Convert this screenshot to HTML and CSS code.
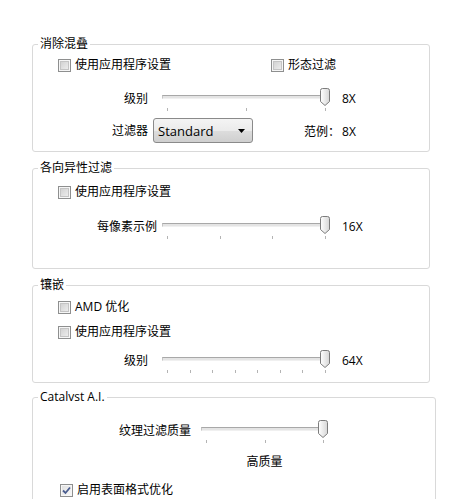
FILE: index.html
```html
<!DOCTYPE html>
<html lang="zh-CN">

<head>
    <meta charset="UTF-8">
    <meta name="viewport" content="width=device-width, initial-scale=1.0">
    <title>3D 设置</title>
    <link rel="stylesheet" href="styles.css">
</head>

<body>

    <!-- 消除混叠 -->
    <fieldset class="group group-aa">
        <legend>消除混叠</legend>
        <div class="check-row row-aa">
            <label class="check check-wide"><span class="box"></span>使用应用程序设置</label>
            <label class="check"><span class="box"></span>形态过滤</label>
        </div>
        <div class="slider-row row-aa-level">
            <span class="slider-label label-short">级别</span>
            <div class="slider gap-wide">
                <div class="track"></div>
                <svg class="thumb" width="10" height="18" viewBox="0 0 10 18"><use href="#thumb"></use></svg>
                <div class="ticks"><i></i><i></i><i></i></div>
            </div>
            <span class="slider-value">8X</span>
        </div>
        <div class="filter-row">
            <span class="slider-label label-short">过滤器</span>
            <div class="combo">
                <span>Standard</span>
                <svg width="7" height="4" viewBox="0 0 7 4"><path d="M0 0H7L3.5 4Z" fill="#000"></path></svg>
            </div>
            <span class="sample">范例：<span class="sample-value">8X</span></span>
        </div>
    </fieldset>

    <!-- 各向异性过滤 -->
    <fieldset class="group group-af">
        <legend>各向异性过滤</legend>
        <div class="check-row row-af">
            <label class="check"><span class="box"></span>使用应用程序设置</label>
        </div>
        <div class="slider-row row-af-level">
            <span class="slider-label label-mid">每像素示例</span>
            <div class="slider gap-narrow">
                <div class="track"></div>
                <svg class="thumb" width="10" height="18" viewBox="0 0 10 18"><use href="#thumb"></use></svg>
                <div class="ticks"><i></i><i></i><i></i><i></i></div>
            </div>
            <span class="slider-value">16X</span>
        </div>
    </fieldset>

    <!-- 镶嵌 -->
    <fieldset class="group group-tess">
        <legend>镶嵌</legend>
        <div class="check-row row-tess-amd">
            <label class="check"><span class="box"></span>AMD 优化</label>
        </div>
        <div class="check-row row-tess-app">
            <label class="check"><span class="box"></span>使用应用程序设置</label>
        </div>
        <div class="slider-row row-tess-level">
            <span class="slider-label label-short">级别</span>
            <div class="slider gap-wide">
                <div class="track"></div>
                <svg class="thumb" width="10" height="18" viewBox="0 0 10 18"><use href="#thumb"></use></svg>
                <div class="ticks"><i></i><i></i><i></i><i></i><i></i><i></i><i></i><i></i></div>
            </div>
            <span class="slider-value">64X</span>
        </div>
    </fieldset>

    <!-- Catalyst A.I. -->
    <fieldset class="group group-ai">
        <legend>Catalvst A.I.</legend>
        <div class="slider-row row-ai-level">
            <span class="slider-label label-long">纹理过滤质量</span>
            <div class="slider slider-small">
                <div class="track"></div>
                <svg class="thumb" width="10" height="18" viewBox="0 0 10 18"><use href="#thumb"></use></svg>
                <div class="ticks"><i></i><i></i><i></i></div>
            </div>
        </div>
        <div class="quality-row">
            <span class="quality">高质量</span>
        </div>
        <div class="check-row row-ai-surface">
            <label class="check"><span class="box checked">
                <svg width="9" height="9" viewBox="0 0 9 9"><path d="M1 4.5L3.5 7L8 1.5" fill="none" stroke="#4a5d8f" stroke-width="1.8"></path></svg>
            </span>启用表面格式优化</label>
        </div>
    </fieldset>

    <svg class="defs" width="0" height="0">
        <defs>
            <linearGradient id="thumb-fill" x1="0" y1="0" x2="1" y2="0">
                <stop offset="0" stop-color="#ffffff"></stop>
                <stop offset="1" stop-color="#d6d6d6"></stop>
            </linearGradient>
            <path id="thumb" d="M0.5 2.5Q0.5 0.5 2.5 0.5H7.5Q9.5 0.5 9.5 2.5V13.5L5 17.5L0.5 13.5Z" fill="url(#thumb-fill)" stroke="#7c7c7c"></path>
        </defs>
    </svg>

</body>

</html>
```

FILE: styles.css
```css
body {
    margin: 0;
    padding: 36px 0 0 0;
    font-family: 'Open Sans', 'Noto Sans CJK SC', sans-serif;
    font-size: 12px;
    color: #000000;
    background: #ffffff;
}

.defs {
    position: absolute;
}

/* group boxes */

.group {
    box-sizing: border-box;
    width: 398px;
    margin: 0 0 8px 32px;
    padding: 0;
    border: 1px solid #d9d9d9;
    border-radius: 3px;
}

.group legend {
    margin-left: 5px;
    padding: 0 2px;
    line-height: 16px;
}

.group-aa {
    padding-bottom: 8px;
}

.group-af {
    padding-bottom: 28px;
}

.group-tess {
    padding-bottom: 8px;
}

.group-ai {
    width: 404px;
    margin-top: -2px;
    padding-bottom: 20px;
}

/* checkboxes */

.check-row {
    display: flex;
    height: 18px;
    padding-left: 25px;
}

.check {
    display: flex;
    align-items: center;
    line-height: 18px;
}

.check-wide {
    width: 213px;
}

.box {
    box-sizing: border-box;
    width: 13px;
    height: 13px;
    margin-right: 4px;
    border: 1px solid #8e8f8f;
    background: linear-gradient(135deg, #cbcbcb, #f3f3f3);
    box-shadow: inset 0 0 0 1px #f6f6f6, inset 0 0 0 2px #c4c4c4;
}

.box.checked {
    display: flex;
    align-items: center;
    justify-content: center;
    background: linear-gradient(135deg, #dedede, #fafafa);
    box-shadow: inset 0 0 0 1px #f6f6f6;
}

.row-aa {
    margin-top: 4px;
}

.row-af {
    margin-top: 7px;
}

.row-tess-amd {
    margin-top: 5px;
}

.row-tess-app {
    margin-top: 7px;
}

.row-ai-surface {
    margin-top: 10px;
    padding-left: 27px;
}

/* sliders */

.slider-row {
    display: flex;
    align-items: flex-start;
    height: 24px;
}

.slider-label {
    flex: none;
    margin-top: 2px;
    line-height: 18px;
    text-align: right;
}

.label-short {
    width: 115px;
}

.label-mid {
    width: 124px;
}

.label-long {
    width: 158px;
}

.slider {
    position: relative;
    flex: none;
    width: 168px;
    height: 24px;
}

.gap-wide {
    margin-left: 14px;
}

.gap-narrow {
    margin-left: 5px;
}

.slider-small {
    width: 127px;
    margin-left: 10px;
}

.track {
    box-sizing: border-box;
    height: 4px;
    margin-top: 7px;
    border-top: 1px solid #a8a8a8;
    border-left: 1px solid #c4c4c4;
    border-bottom: 1px solid #f0f0f0;
    background: #e4e4e4;
}

.thumb {
    position: absolute;
    top: 0;
    right: 0;
}

.ticks {
    display: flex;
    justify-content: space-between;
    margin: 9px 4px 0 5px;
}

.ticks i {
    width: 1px;
    height: 3px;
    background: #b4b4b4;
}

.slider-value {
    margin: 2px 0 0 12px;
    line-height: 18px;
}

.row-aa-level {
    margin-top: 14px;
}

.row-af-level {
    margin-top: 15px;
}

.row-tess-level {
    margin-top: 9px;
}

.row-ai-level {
    margin-top: 15px;
}

/* filter combo */

.filter-row {
    display: flex;
    align-items: center;
    height: 25px;
    margin-top: 6px;
}

.filter-row .slider-label {
    margin-top: 0;
}

.combo {
    box-sizing: border-box;
    display: flex;
    align-items: center;
    justify-content: space-between;
    width: 100px;
    height: 25px;
    margin-left: 5px;
    padding: 0 7px 0 4px;
    border: 1px solid #8a8a8a;
    border-radius: 3px;
    background: linear-gradient(#f4f4f4, #ebebeb 50%, #dddddd 51%, #cfcfcf);
    font-size: 13px;
}

.sample {
    margin-left: 51px;
}

.sample-value {
    margin-left: 2px;
}

/* quality label */

.quality-row {
    height: 18px;
    margin-top: 9px;
    padding-left: 168px;
}

.quality {
    display: block;
    width: 127px;
    line-height: 18px;
    text-align: center;
}
```
